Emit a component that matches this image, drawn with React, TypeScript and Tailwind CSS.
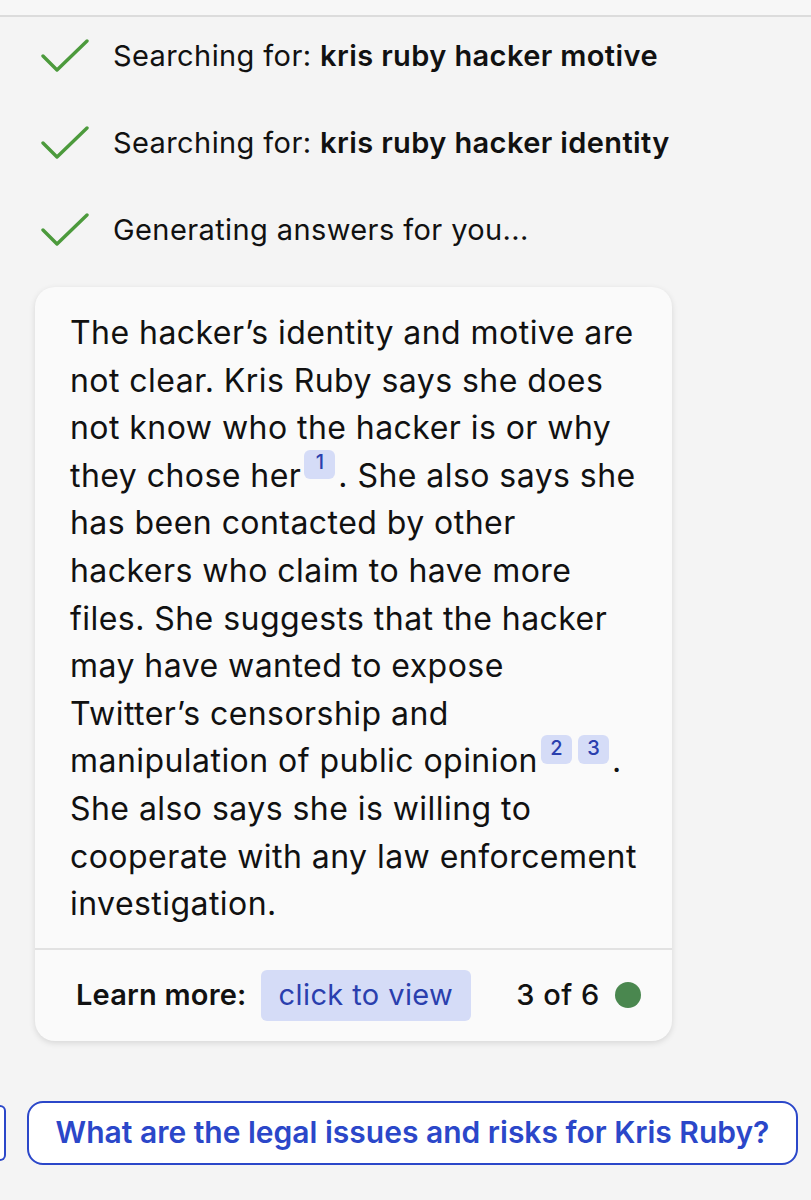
import React from "react";

const font = { fontFamily: "Inter, 'Noto Sans', sans-serif" };

function Check() {
    return (
        <svg width="48" height="34" viewBox="0 0 48 34" className="shrink-0">
            <path d="M2 17 L16 31 L46 2" fill="none" stroke="#4c9a3c" strokeWidth="3.4" strokeLinecap="round" strokeLinejoin="round" />
        </svg>
    );
}

function Cite({ n }: { n: number }) {
    return (
        <span className="inline-flex items-center justify-center w-[31px] h-[29px] rounded-md bg-[#d5dcf7] text-[#2a3fae] text-[20px] font-medium align-top relative -top-[2px] mx-[3px] leading-none pb-[4px] tracking-normal">
            {n}
        </span>
    );
}

export default function App() {
    const steps = [
        { label: "Searching for: ", bold: "kris ruby hacker motive" },
        { label: "Searching for: ", bold: "kris ruby hacker identity" },
        { label: "Generating answers for you...", bold: "" },
    ];

    // lines broken as in the answer bubble
    const lines: React.ReactNode[] = [
        "The hacker’s identity and motive are",
        "not clear. Kris Ruby says she does",
        "not know who the hacker is or why",
        <>they chose her<Cite n={1} />. She also says she</>,
        "has been contacted by other",
        "hackers who claim to have more",
        "files. She suggests that the hacker",
        "may have wanted to expose",
        "Twitter’s censorship and",
        <>manipulation of public opinion<Cite n={2} /><Cite n={3} />.</>,
        "She also says she is willing to",
        "cooperate with any law enforcement",
        "investigation.",
    ];

    return (
        <div className="w-[811px] h-[1200px] bg-[#f4f4f4] overflow-hidden text-[#111]" style={font}>
            <div className="h-[17px] bg-[#f7f7f7] border-b-2 border-[#dcdcdc]" />

            <div className="flex flex-col gap-[53px] pl-[41px] pt-[22px]">
                {steps.map((s, i) => (
                    <div key={i} className="flex items-center gap-[24px] h-[34px]">
                        <Check />
                        <span className="text-[29px] tracking-[0.4px]">
                            {s.label}
                            {s.bold && <b className="font-semibold">{s.bold}</b>}
                        </span>
                    </div>
                ))}
            </div>

            <div className="ml-[35px] mt-[40px] w-[637px] bg-[#fafafa] rounded-[20px] shadow-[0_2px_6px_rgba(0,0,0,0.12)] overflow-hidden">
                <p className="pl-[35px] pr-[20px] pt-[22px] pb-[20px] text-[32px] leading-[47.6px] tracking-[0.45px] whitespace-nowrap">
                    {lines.map((l, i) => (
                        <span key={i} className="block">{l}</span>
                    ))}
                </p>
                <div className="border-t-2 border-[#e2e2e2] flex items-center px-[41px] h-[93px] whitespace-nowrap">
                    <span className="text-[29px] font-semibold tracking-[0.2px]">Learn more:</span>
                    <span className="ml-[14px] bg-[#d5dcf7] text-[#2a3fae] text-[29px] rounded-md px-[18px] h-[51px] flex items-center tracking-[0.4px]">click to view</span>
                    <span className="ml-[45px] text-[29px] font-medium tracking-[0.5px]">3 of 6</span>
                    <span className="ml-[15px] w-[26px] h-[26px] shrink-0 rounded-full bg-[#4a874f]" />
                </div>
            </div>

            <div className="flex items-center mt-[60px]">
                <div className="w-[6px] h-[56px] border-2 border-l-0 border-[#2b47c9] rounded-r-[10px] bg-white" />
                <button className="ml-[21px] w-[771px] h-[64px] rounded-[16px] border-2 border-[#2b47c9] bg-white text-[#2b47c9] text-[30px] font-semibold tracking-[0px]">
                    What are the legal issues and risks for Kris Ruby?
                </button>
            </div>
        </div>
    );
}
